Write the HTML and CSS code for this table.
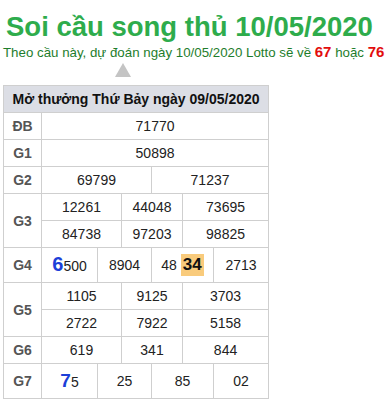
FILE: index.html
```html
<!DOCTYPE html>
<html lang="vi">
<head>
<meta charset="utf-8">
<link rel="stylesheet" href="styles.css">
</head>
<body>
<div class="page">
  <h1 class="title">Soi cầu song thủ 10/05/2020</h1>
  <p class="lead">Theo cầu này, dự đoán ngày 10/05/2020 Lotto sẽ về <b class="hit">67</b> hoặc <b class="hit">76</b></p>
  <div class="arrow-row"><span class="arrow"></span></div>
  <table class="kq">
    <colgroup>
      <col class="c-lbl"><col class="c1"><col class="c2"><col class="c3"><col class="c4"><col class="c5"><col class="c6">
    </colgroup>
    <thead>
      <tr><th colspan="7" class="head">Mở thưởng Thứ Bảy ngày 09/05/2020</th></tr>
    </thead>
    <tbody>
      <tr><td class="lbl">ĐB</td><td colspan="6">71770</td></tr>
      <tr><td class="lbl">G1</td><td colspan="6">50898</td></tr>
      <tr><td class="lbl">G2</td><td colspan="3">69799</td><td colspan="3">71237</td></tr>
      <tr><td class="lbl" rowspan="2">G3</td><td colspan="2">12261</td><td colspan="2">44048</td><td colspan="2">73695</td></tr>
      <tr><td colspan="2">84738</td><td colspan="2">97203</td><td colspan="2">98825</td></tr>
      <tr class="tall"><td class="lbl">G4</td><td><span class="big">6</span>500</td><td colspan="2">8904</td><td colspan="2">48 <span class="mark">34</span></td><td>2713</td></tr>
      <tr><td class="lbl" rowspan="2">G5</td><td colspan="2">1105</td><td colspan="2">9125</td><td colspan="2">3703</td></tr>
      <tr><td colspan="2">2722</td><td colspan="2">7922</td><td colspan="2">5158</td></tr>
      <tr><td class="lbl">G6</td><td colspan="2">619</td><td colspan="2">341</td><td colspan="2">844</td></tr>
      <tr class="tall"><td class="lbl">G7</td><td><span class="big b7">7</span>5</td><td colspan="2">25</td><td colspan="2">85</td><td>02</td></tr>
    </tbody>
  </table>
</div>
</body>
</html>
```

FILE: styles.css
```css
html, body {
  margin: 0;
  padding: 0;
  background: #fff;
}
body {
  font-family: "Liberation Sans", Arial, sans-serif;
  color: #222;
}
.page {
  padding: 0 3px;
}
.title {
  margin: 12px 0 0 3px;
  font-size: 27.5px;
  line-height: 30px;
  font-weight: bold;
  color: #2eac4c;
}
.lead {
  margin: 1px 0 0 0;
  font-size: 13.3px;
  line-height: 18px;
  color: #1e7d2c;
  white-space: nowrap;
}
.hit {
  color: #e20d0d;
  font-size: 15px;
}
.arrow-row {
  padding-left: 112px;
  height: 23px;
  display: flex;
  align-items: flex-end;
}
.arrow {
  width: 0;
  height: 0;
  border-left: 8px solid transparent;
  border-right: 8px solid transparent;
  border-bottom: 14px solid #c4c4c4;
  margin-bottom: 8px;
}
.kq {
  border-collapse: collapse;
  table-layout: fixed;
  width: 266px;
  font-size: 14px;
  border: 1px solid #b9b9b9;
}
.c-lbl { width: 38px; }
.c1 { width: 56px; }
.c2 { width: 24px; }
.c3 { width: 30px; }
.c4 { width: 31px; }
.c5 { width: 31px; }
.c6 { width: 55px; }
.kq th, .kq td {
  border: 1px solid #cfcfcf;
  text-align: center;
  padding: 4px 0;
  line-height: 18px;
  white-space: nowrap;
}
.head {
  background: #dcdee5;
  font-weight: bold;
  color: #111;
  font-size: 14px;
}
.lbl {
  font-weight: bold;
  color: #555;
}
.tall td {
  height: 34px;
  padding: 0;
}
.big {
  color: #1c3fd8;
  font-weight: bold;
  font-size: 20px;
}
.b7 {
  font-size: 19px;
}
.mark {
  display: inline-block;
  background: #f9cb7c;
  color: #111;
  font-weight: bold;
  font-size: 17px;
  line-height: 22px;
  padding: 0 2px;
}
```
